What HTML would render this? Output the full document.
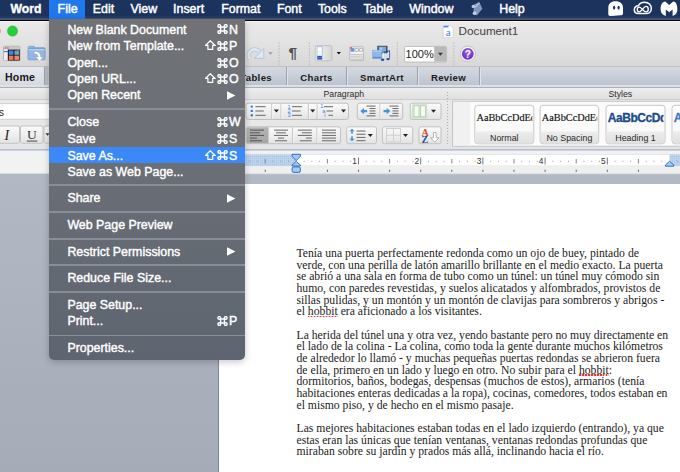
<!DOCTYPE html>
<html><head><meta charset="utf-8">
<style>
*{margin:0;padding:0;box-sizing:border-box}
html,body{width:680px;height:472px;overflow:hidden;background:#b3b9c2;font-family:"Liberation Sans",sans-serif}
.a{position:absolute}
#menubar{left:0;top:0;width:680px;height:19.7px;background:linear-gradient(#1c335d 0px,#1c335d 16.4px,#213b69 16.4px,#213b69 18.3px,#4a5468 18.3px)}
.m{position:absolute;top:2.4px;font-size:12.4px;color:#fff;line-height:15px;-webkit-text-stroke:0.45px #fff;white-space:nowrap}
#mbline{left:0;top:19.7px;width:680px;height:1.3px;background:#0a0b0e}
#toolbar{left:0;top:21px;width:680px;height:46px;background:linear-gradient(#f2f2f2,#e8e8e8 6%,#e4e4e4 40%,#d8d8d8);border-bottom:1px solid #c0c0c0}
#tabs{left:0;top:67px;width:680px;height:18px;background:linear-gradient(#d5dae1,#bdc4ce)}
.tab{position:absolute;top:0;height:18px;border-right:1px solid #9ba2ac;box-shadow:1px 0 0 #e0e4ea;font-size:9.6px;font-weight:bold;color:#1a1a1a;text-align:center;line-height:21.5px;letter-spacing:0.35px}
#tabline{left:0;top:85px;width:680px;height:2.5px;background:#dde1e7;border-bottom:1px solid #aab0b9}
#ribbon{left:0;top:87.5px;width:680px;height:62px;background:linear-gradient(#ececec,#e4e4e4)}
#grphdr{left:0;top:87.5px;width:680px;height:12px;background:linear-gradient(#ededed,#e0e0e0);border-bottom:1px solid #cdcdcd}
.ghdr{position:absolute;top:1.6px;font-size:8.7px;color:#2a2a2a;line-height:10px}
#docbg{left:0;top:174px;width:680px;height:298px;background:linear-gradient(#b3b9c4,#abb1bd 55%,#a5abb7)}
#page{left:218px;top:183.7px;width:470px;height:300px;background:#fff;border-left:1px solid #7f858e}
.dl{position:absolute;left:296.5px;font-family:"Liberation Serif",serif;font-size:11.7px;color:#222;line-height:12px;white-space:nowrap}
.dl u{text-decoration:none;position:relative}
.dl u::after{content:'';position:absolute;left:0;right:0;top:10.6px;height:1.6px;background:repeating-linear-gradient(90deg,#e03a3a 0 1.5px,rgba(224,58,58,0.35) 1.5px 3px)}
#svg{left:0;top:0}
#menu{left:49px;top:19px;width:196px;height:341px;background:linear-gradient(#707276,#6b6f76 40%,#636972 75%,#5f6570);border-radius:0 0 5px 5px;box-shadow:0 2px 7px rgba(0,0,0,0.22);overflow:hidden}
.mi{position:absolute;left:18.4px;font-size:12.4px;color:#fff;line-height:15px;white-space:nowrap;-webkit-text-stroke:0.4px #fff}
.ic{position:absolute;line-height:0}
.sep{position:absolute;left:0;width:196px;height:1.5px;background:#898e96}
.hl{position:absolute;left:0;width:196px;background:#3a89f6}
.title{left:458.6px;top:25.3px;font-size:11.7px;color:#3f3f3f;line-height:12px}
</style></head><body>
<div id="toolbar" class="a"></div>
<div id="tabs" class="a">
  <div class="tab" style="left:-1px;width:46px;box-shadow:1px 0 0 #b9bec6,2px 0 0 #b9bec6,3px 0 0 #b9bec6,4px 0 0 #c3c8cf;background:linear-gradient(#e6e9ee,#d5dae0);letter-spacing:0.1px;padding-right:3px;font-size:10.6px;line-height:21px">Home</div>
  <div class="tab" style="left:230px;width:57px;text-align:right;padding-right:14px">Tables</div>
  <div class="tab" style="left:287px;width:60px">Charts</div>
  <div class="tab" style="left:347px;width:71px">SmartArt</div>
  <div class="tab" style="left:418px;width:62px">Review</div>
</div>
<div id="tabline" class="a"></div>
<div id="ribbon" class="a"></div>
<div id="grphdr" class="a">
  <div class="ghdr" style="left:323.5px">Paragraph</div>
  <div class="ghdr" style="left:608.5px">Styles</div>
</div>
<div id="docbg" class="a"></div>
<div id="page" class="a"></div>
<svg id="svg" class="a" width="680" height="472" viewBox="0 0 680 472"><defs>
<linearGradient id="gbtn" x1="0" y1="0" x2="0" y2="1"><stop offset="0" stop-color="#fbfbfb"/><stop offset="1" stop-color="#e3e3e3"/></linearGradient>
<linearGradient id="gpress" x1="0" y1="0" x2="0" y2="1"><stop offset="0" stop-color="#b4b4b4"/><stop offset="1" stop-color="#a6a6a6"/></linearGradient>
<linearGradient id="gcard" x1="0" y1="0" x2="0" y2="1"><stop offset="0" stop-color="#ffffff"/><stop offset="1" stop-color="#f6f6f6"/></linearGradient>
<linearGradient id="glabel" x1="0" y1="0" x2="0" y2="1"><stop offset="0" stop-color="#ececec"/><stop offset="1" stop-color="#e0e0e0"/></linearGradient>
<linearGradient id="gside" x1="0" y1="0" x2="1" y2="0"><stop offset="0" stop-color="#f8f8f8"/><stop offset="1" stop-color="#d4d4d4"/></linearGradient>
<radialGradient id="ghelp" cx="0.5" cy="0.35" r="0.6"><stop offset="0" stop-color="#9a68e8"/><stop offset="1" stop-color="#6a2fc0"/></radialGradient>
<pattern id="rdots" width="2" height="2" patternUnits="userSpaceOnUse"><rect width="2" height="2" fill="#bcd3ee"/><rect width="1" height="1" fill="#a9c4e6"/></pattern>
</defs><circle cx="-4.6" cy="31" r="5.2" fill="#f26b5a"/><circle cx="12.5" cy="31" r="5.2" fill="#2bcb40" stroke="#24b536" stroke-width="0.4"/><rect x="3.7" y="46.3" width="16.2" height="14.3" rx="1" fill="#d8d8d8" stroke="#8a8a8a" stroke-width="0.6"/><rect x="3.9" y="46.5" width="15.8" height="3" fill="#c9c9c9"/><circle cx="5.6" cy="48" r="0.8" fill="#e8553a"/><circle cx="8" cy="48" r="0.8" fill="#e8553a"/><rect x="4" y="49.6" width="3.8" height="10.8" fill="#eef0f3"/><rect x="4" y="51" width="3.8" height="1.2" fill="#3a7fe0"/><rect x="7.8" y="49.6" width="11.9" height="10.9" fill="#151515"/><rect x="8.8" y="50.5" width="4.6" height="4.3" fill="#3e86e6"/><rect x="14.4" y="50.5" width="4.6" height="4.3" fill="#6d9fd6"/><circle cx="17.8" cy="51" r="0.8" fill="#3ad24a"/><rect x="8.8" y="55.6" width="4.6" height="4.3" fill="#ee7a55"/><rect x="14.4" y="55.6" width="4.6" height="4.3" fill="#f08a5e"/><path d="M28.3,49 V47.2 a1,1 0 0 1 1,-1 h4.8 l1.3,1.4 h8.4 a1.2,1.2 0 0 1 1.2,1.2 V49 Z" fill="#8cafdf" stroke="#6b92c9" stroke-width="0.5"/><rect x="27.9" y="48.4" width="17.3" height="11.5" rx="1.3" fill="#94b6e2" stroke="#6b92c9" stroke-width="0.6"/><rect x="28.5" y="49.2" width="16.1" height="1.1" fill="#c2d6f0"/><path d="M34.2,51.4 C38.4,51.2 40.6,53.4 40.8,57 H43.2 L39.6,61.6 L35.8,57 H38.2 C38,54.8 36.8,53.6 34.2,53.8 Z" fill="#ffffff" stroke="#9aa6b6" stroke-width="0.5"/><path d="M250,59 A5.6,5.6 0 0 1 259.2,51.6" stroke="#b3c4db" stroke-width="4.4" fill="none"/><path d="M250,59 A5.6,5.6 0 0 1 259.2,51.6" stroke="#dfe8f3" stroke-width="2.6" fill="none"/><path d="M263.8,48.5 V58.3 H254.5 Z" fill="#dfe8f3" stroke="#b3c4db" stroke-width="0.9" stroke-linejoin="round"/><path d="M268.25,52.15 h4.5 l-2.25,2.6999999999999997 z" fill="#9a9a9a"/><line x1="279" y1="42.6" x2="279" y2="64.7" stroke="#a8a8a8" stroke-width="1" stroke-dasharray="1 2"/><line x1="309.4" y1="42.6" x2="309.4" y2="64.7" stroke="#a8a8a8" stroke-width="1" stroke-dasharray="1 2"/><line x1="397.3" y1="42.6" x2="397.3" y2="64.7" stroke="#a8a8a8" stroke-width="1" stroke-dasharray="1 2"/><line x1="453.8" y1="42.6" x2="453.8" y2="64.7" stroke="#a8a8a8" stroke-width="1" stroke-dasharray="1 2"/><line x1="447.6" y1="92" x2="447.6" y2="146" stroke="#a8a8a8" stroke-width="1" stroke-dasharray="1 2"/><text x="288.4" y="58.4" font-family="Liberation Sans" font-size="15.5" font-weight="bold" fill="#505050">&#182;</text><rect x="315.3" y="45.6" width="16.6" height="15.2" rx="1.5" fill="url(#gside)" stroke="#b5b5b5" stroke-width="0.7"/><rect x="317" y="46.6" width="5.2" height="13" fill="#eef3fa" stroke="#86b0e6" stroke-width="0.6"/><rect x="317.8" y="48" width="3.6" height="2.9" fill="#fff"/><rect x="317.8" y="52.2" width="3.6" height="2.9" fill="#fafcff"/><rect x="317.3" y="55.9" width="4.6" height="3.5" fill="#2459b2"/><rect x="317.6" y="57.2" width="4" height="0.6" fill="#6f97d6"/><path d="M336.7,51.940000000000005 h4.2 l-2.1,2.52 z" fill="#111"/><rect x="349.8" y="46.9" width="13.8" height="13.7" rx="1" fill="#f3f3f3" stroke="#9c9c9c" stroke-width="0.6"/><rect x="350.2" y="47.5" width="13" height="4.6" fill="#dedede"/><rect x="350.6" y="48.2" width="3.5" height="3.4" fill="#5d95dc"/><circle cx="351" cy="47.8" r="0.9" fill="#e84b3a"/><rect x="354.8" y="48.6" width="3.8" height="2.6" rx="1.2" fill="#fff" stroke="#777" stroke-width="0.5"/><rect x="359.1" y="48.6" width="3.8" height="2.6" rx="1.2" fill="#fff" stroke="#777" stroke-width="0.5"/><rect x="350.5" y="54.2" width="12.4" height="1.1" fill="#bdbdbd"/><rect x="350.5" y="56.400000000000006" width="12.4" height="1.1" fill="#bdbdbd"/><rect x="350.5" y="58.6" width="12.4" height="1.1" fill="#bdbdbd"/><rect x="377.2" y="45.8" width="10.4" height="7.4" rx="0.6" fill="#4f5358"/><rect x="378.8" y="46.8" width="7.2" height="5.6" fill="#79a9e0"/><rect x="379.5" y="47.4" width="3" height="2.5" fill="#a9c9ee"/><rect x="372.6" y="50.2" width="9.2" height="8.3" fill="#8fb8ea" stroke="#6d9bd6" stroke-width="0.5"/><rect x="372.9" y="56.8" width="8.6" height="1.4" fill="#5f8fcf"/><rect x="372.9" y="50.5" width="8.6" height="1.2" fill="#b5d0f0"/><path d="M382.6,52.6 L389.4,51 V58.6" fill="none" stroke="#1f53a8" stroke-width="1.3"/><path d="M383.3,52.4 V59.4" fill="none" stroke="#e8eef6" stroke-width="1.1"/><path d="M388.7,51.4 V58.8" fill="none" stroke="#e8eef6" stroke-width="1.1"/><ellipse cx="382.6" cy="59.7" rx="1.7" ry="1.2" fill="#1f53a8"/><ellipse cx="388" cy="59.1" rx="1.7" ry="1.2" fill="#1f53a8"/><rect x="404.6" y="46.4" width="42" height="15.6" rx="1" fill="#ffffff" stroke="#b3b3b3" stroke-width="0.8"/><rect x="434.4" y="46.8" width="11.9" height="14.8" fill="#b9b9b9"/><line x1="434.4" y1="46.8" x2="434.4" y2="61.6" stroke="#bdbdbd" stroke-width="0.6"/><path d="M437.9,52.7 h5 l-2.5,3.0 z" fill="#3a3a3a"/><text x="405.6" y="58.4" font-family="Liberation Sans" font-size="11" fill="#1a1a1a">100%</text><circle cx="467.8" cy="53.8" r="7.6" fill="#f8f8f8" stroke="#a8a8a8" stroke-width="0.6"/><circle cx="467.8" cy="53.8" r="5.9" fill="url(#ghelp)"/><text x="467.8" y="57.6" font-family="Liberation Sans" font-size="10" font-weight="bold" fill="#fff" text-anchor="middle">?</text><path d="M443.2,25.5 h7 l3,3 v9.1 h-10 z" fill="#ffffff" stroke="#c9c9c9" stroke-width="0.6"/><rect x="443.5" y="25.8" width="5" height="1.6" fill="#4a8be0"/><text x="448.3" y="36.3" font-family="Liberation Serif" font-size="11" fill="#3a7fd8" text-anchor="middle">a</text><rect x="-2" y="103.7" width="60" height="15.5" fill="#ffffff" stroke="#c8c8c8" stroke-width="0.8"/><rect x="-5.5" y="126.0" width="25" height="17.30000000000001" rx="2" fill="url(#gbtn)" stroke="#c2c2c2" stroke-width="1"/><rect x="20.5" y="126.0" width="22.5" height="17.30000000000001" rx="2" fill="url(#gbtn)" stroke="#c2c2c2" stroke-width="1"/><rect x="44.0" y="126.0" width="15.5" height="17.30000000000001" rx="2" fill="url(#gbtn)" stroke="#c2c2c2" stroke-width="1"/><text x="4.5" y="139.5" font-family="Liberation Serif" font-size="14" font-style="italic" fill="#222">I</text><text x="27" y="139" font-family="Liberation Serif" font-size="13.5" fill="#333">U</text><rect x="26.8" y="140.6" width="10.5" height="0.9" fill="#333"/><path d="M45.5,133.3 h4 l-2.0,2.4 z" fill="#333"/><rect x="246.0" y="103.2" width="102.5" height="16.299999999999997" rx="2.5" fill="url(#gbtn)" stroke="#bfbfbf" stroke-width="1"/><rect x="271.3" y="103.7" width="1" height="15.299999999999997" fill="#c4c4c4"/><rect x="272.3" y="103.7" width="0.8" height="15.299999999999997" fill="#ffffff" opacity="0.7"/><rect x="280.5" y="103.7" width="1" height="15.299999999999997" fill="#c4c4c4"/><rect x="281.5" y="103.7" width="0.8" height="15.299999999999997" fill="#ffffff" opacity="0.7"/><rect x="307.9" y="103.7" width="1" height="15.299999999999997" fill="#c4c4c4"/><rect x="308.9" y="103.7" width="0.8" height="15.299999999999997" fill="#ffffff" opacity="0.7"/><rect x="316.7" y="103.7" width="1" height="15.299999999999997" fill="#c4c4c4"/><rect x="317.7" y="103.7" width="0.8" height="15.299999999999997" fill="#ffffff" opacity="0.7"/><path d="M273.9,109.5 h5 l-2.5,3.0 z" fill="#222"/><circle cx="251.8" cy="106.6" r="1.2" fill="#2f7be6"/><circle cx="251.8" cy="110.9" r="1.2" fill="#2f7be6"/><circle cx="251.8" cy="115.3" r="1.2" fill="#2f7be6"/><rect x="255.4" y="106.1" width="10.3" height="1.1" fill="#747474"/><rect x="255.4" y="110.44999999999999" width="8.4" height="1.1" fill="#747474"/><rect x="255.4" y="114.8" width="10.3" height="1.1" fill="#747474"/><path d="M310.2,109.5 h5 l-2.5,3.0 z" fill="#222"/><text x="287.4" y="108.6" font-family="Liberation Sans" font-size="5.6" fill="#3a84e6">1</text><text x="287.4" y="113" font-family="Liberation Sans" font-size="5.6" fill="#3a84e6">2</text><text x="287.4" y="117.4" font-family="Liberation Sans" font-size="5.6" fill="#3a84e6">3</text><rect x="292" y="106.1" width="10" height="1.1" fill="#747474"/><rect x="292" y="110.44999999999999" width="8.5" height="1.1" fill="#747474"/><rect x="292" y="114.8" width="10" height="1.1" fill="#747474"/><path d="M341.0,109.5 h5 l-2.5,3.0 z" fill="#222"/><text x="320.3" y="108" font-family="Liberation Sans" font-size="5.6" fill="#3a84e6">1</text><text x="322.3" y="112.6" font-family="Liberation Sans" font-size="5.6" fill="#3a84e6">a</text><text x="324.3" y="117.4" font-family="Liberation Sans" font-size="5.6" fill="#3a84e6">i</text><rect x="324" y="106.1" width="9" height="1.1" fill="#747474"/><rect x="326.5" y="110.44999999999999" width="6.5" height="1.1" fill="#747474"/><rect x="328.5" y="114.8" width="4.5" height="1.1" fill="#747474"/><rect x="357.3" y="103.2" width="45.39999999999998" height="16.299999999999997" rx="2.5" fill="url(#gbtn)" stroke="#bfbfbf" stroke-width="1"/><rect x="379.5" y="103.7" width="1" height="15.299999999999997" fill="#c4c4c4"/><rect x="380.5" y="103.7" width="0.8" height="15.299999999999997" fill="#ffffff" opacity="0.7"/><rect x="366.5" y="105.5" width="9" height="1.1" fill="#747474"/><rect x="369.5" y="107.95" width="6" height="1.1" fill="#747474"/><rect x="369.5" y="110.4" width="6" height="1.1" fill="#747474"/><rect x="369.5" y="112.85" width="6" height="1.1" fill="#747474"/><rect x="366.5" y="115.3" width="9" height="1.1" fill="#747474"/><path d="M360.3,111.1 l3.6,-3.1 v2 h3.2 v2.2 h-3.2 v2 z" fill="#4b8fe0"/><rect x="389.5" y="105.5" width="9" height="1.1" fill="#747474"/><rect x="392.5" y="107.95" width="6" height="1.1" fill="#747474"/><rect x="392.5" y="110.4" width="6" height="1.1" fill="#747474"/><rect x="392.5" y="112.85" width="6" height="1.1" fill="#747474"/><rect x="389.5" y="115.3" width="9" height="1.1" fill="#747474"/><path d="M390.3,111.1 l-3.6,-3.1 v2 h-3.2 v2.2 h3.2 v2 z" fill="#4b8fe0"/><rect x="410.2" y="103.2" width="30.80000000000001" height="16.299999999999997" rx="2" fill="url(#gbtn)" stroke="#c2c2c2" stroke-width="1"/><rect x="412.7" y="104.8" width="14" height="13" fill="#e3ede1" stroke="#c4d9be" stroke-width="0.8"/><rect x="414" y="105.8" width="5" height="11" fill="#f6f9f5" stroke="#a6c89d" stroke-width="0.7"/><rect x="420.5" y="105.8" width="5" height="11" fill="#f6f9f5" stroke="#a6c89d" stroke-width="0.7"/><path d="M431.0,109.7 h5 l-2.5,3.0 z" fill="#222"/><rect x="246.0" y="126.8" width="94.5" height="16.89999999999999" rx="2.5" fill="url(#gbtn)" stroke="#bfbfbf" stroke-width="1"/><path d="M268.3,127.3 V143.2 H249.0 a2.5,2.5 0 0 1 -2.5,-2.5 V129.8 a2.5,2.5 0 0 1 2.5,-2.5 Z" fill="url(#gpress)"/><rect x="268.3" y="127.3" width="1" height="15.899999999999991" fill="#c4c4c4"/><rect x="269.3" y="127.3" width="0.8" height="15.899999999999991" fill="#ffffff" opacity="0.7"/><rect x="292.1" y="127.3" width="1" height="15.899999999999991" fill="#c4c4c4"/><rect x="293.1" y="127.3" width="0.8" height="15.899999999999991" fill="#ffffff" opacity="0.7"/><rect x="316.4" y="127.3" width="1" height="15.899999999999991" fill="#c4c4c4"/><rect x="317.4" y="127.3" width="0.8" height="15.899999999999991" fill="#ffffff" opacity="0.7"/><rect x="250" y="129.6" width="14" height="1.1" fill="#5a5a5a"/><rect x="250" y="132.25" width="10" height="1.1" fill="#5a5a5a"/><rect x="250" y="134.9" width="14" height="1.1" fill="#5a5a5a"/><rect x="250" y="137.54999999999998" width="7" height="1.1" fill="#5a5a5a"/><rect x="250" y="140.2" width="12" height="1.1" fill="#5a5a5a"/><rect x="274" y="129.6" width="14" height="1.1" fill="#747474"/><rect x="276" y="132.25" width="10" height="1.1" fill="#747474"/><rect x="274" y="134.9" width="14" height="1.1" fill="#747474"/><rect x="278" y="137.54999999999998" width="6" height="1.1" fill="#747474"/><rect x="275" y="140.2" width="12" height="1.1" fill="#747474"/><rect x="297.8" y="129.6" width="14" height="1.1" fill="#747474"/><rect x="301.8" y="132.25" width="10" height="1.1" fill="#747474"/><rect x="297.8" y="134.9" width="14" height="1.1" fill="#747474"/><rect x="305.8" y="137.54999999999998" width="6" height="1.1" fill="#747474"/><rect x="299.8" y="140.2" width="12" height="1.1" fill="#747474"/><rect x="322" y="129.6" width="14" height="1.1" fill="#747474"/><rect x="322" y="132.25" width="14" height="1.1" fill="#747474"/><rect x="322" y="134.9" width="14" height="1.1" fill="#747474"/><rect x="322" y="137.54999999999998" width="14" height="1.1" fill="#747474"/><rect x="322" y="140.2" width="14" height="1.1" fill="#747474"/><rect x="346.7" y="126.8" width="29.80000000000001" height="16.89999999999999" rx="2" fill="url(#gbtn)" stroke="#c2c2c2" stroke-width="1"/><path d="M352,128.8 l2.5,2.5 h-1.7 v2.5 h-1.6 v-2.5 h-1.7 z M352,141.2 l2.5,-2.5 h-1.7 v-2.5 h-1.6 v2.5 h-1.7 z" fill="#4b8fe0"/><rect x="356.5" y="130.5" width="9" height="1.1" fill="#747474"/><rect x="356.5" y="133.7" width="9" height="1.1" fill="#747474"/><rect x="356.5" y="136.9" width="9" height="1.1" fill="#747474"/><rect x="356.5" y="140.1" width="9" height="1.1" fill="#747474"/><path d="M367.8,134.0 h5 l-2.5,3.0 z" fill="#222"/><rect x="382.5" y="126.8" width="30.19999999999999" height="16.89999999999999" rx="2" fill="url(#gbtn)" stroke="#c2c2c2" stroke-width="1"/><rect x="386.5" y="128.5" width="14" height="13.5" fill="none" stroke="#d0d0d0" stroke-width="1"/><line x1="393.5" y1="128.5" x2="393.5" y2="142" stroke="#d0d0d0"/><line x1="386.5" y1="135.2" x2="400.5" y2="135.2" stroke="#d0d0d0"/><path d="M403.0,134.0 h5 l-2.5,3.0 z" fill="#222"/><rect x="419.0" y="126.8" width="22.0" height="16.89999999999999" rx="2" fill="url(#gbtn)" stroke="#c2c2c2" stroke-width="1"/><text x="421.6" y="136" font-family="Liberation Serif" font-size="10" font-weight="bold" fill="#d8482a">A</text><text x="421.6" y="143.4" font-family="Liberation Serif" font-size="10" font-weight="bold" fill="#1e4f98">Z</text><path d="M433.5,132.5 h2.6 v5.3 h2.8 l-4.1,4.4 l-4.1,-4.4 h2.8 z" fill="#fff" stroke="#8a8a8a" stroke-width="0.6"/><rect x="452.5" y="101.3" width="240" height="45" fill="#fbfbfb" stroke="#c3c3c3" stroke-width="1"/><rect x="453" y="101.8" width="17" height="44" fill="#f1f1f1"/><rect x="474.8" y="105.3" width="58.99999999999994" height="38.5" rx="3" fill="url(#gcard)" stroke="#c7c7c7" stroke-width="1"/><path d="M475.3,131.6 h57.99999999999994 v9.5 a2.5,2.5 0 0 1 -2.5,2.5 h-52.99999999999994 a2.5,2.5 0 0 1 -2.5,-2.5 z" fill="url(#glabel)"/><clipPath id="c474"><rect x="476.3" y="106" width="55.99999999999994" height="25"/></clipPath><text x="476.5" y="121.2" clip-path="url(#c474)" font-family="Liberation Serif" font-size="10.3" fill="#111" stroke="#111" stroke-width="0.15">AaBbCcDdEe</text><text x="504.29999999999995" y="140.6" font-family="Liberation Sans" font-size="8.9" fill="#2a2a2a" text-anchor="middle">Normal</text><rect x="540.1" y="105.3" width="58.60000000000002" height="38.5" rx="3" fill="url(#gcard)" stroke="#c7c7c7" stroke-width="1"/><path d="M540.6,131.6 h57.60000000000002 v9.5 a2.5,2.5 0 0 1 -2.5,2.5 h-52.60000000000002 a2.5,2.5 0 0 1 -2.5,-2.5 z" fill="url(#glabel)"/><clipPath id="c539"><rect x="541.6" y="106" width="55.60000000000002" height="25"/></clipPath><text x="541.8000000000001" y="121.2" clip-path="url(#c539)" font-family="Liberation Serif" font-size="10.3" fill="#111" stroke="#111" stroke-width="0.15">AaBbCcDdEe</text><text x="569.4000000000001" y="140.6" font-family="Liberation Sans" font-size="8.9" fill="#2a2a2a" text-anchor="middle">No Spacing</text><rect x="606.0" y="105.3" width="59.0" height="38.5" rx="3" fill="url(#gcard)" stroke="#c7c7c7" stroke-width="1"/><path d="M606.5,131.6 h58.0 v9.5 a2.5,2.5 0 0 1 -2.5,2.5 h-53.0 a2.5,2.5 0 0 1 -2.5,-2.5 z" fill="url(#glabel)"/><clipPath id="c605"><rect x="607.5" y="106" width="56.0" height="25"/></clipPath><text x="607.8" y="122.3" clip-path="url(#c605)" font-family="Liberation Sans" font-size="12" font-weight="bold" fill="#1d4a8c" stroke="#1d4a8c" stroke-width="0.3" letter-spacing="-0.45">AaBbCcDd</text><text x="635.5" y="140.6" font-family="Liberation Sans" font-size="8.9" fill="#2a2a2a" text-anchor="middle">Heading 1</text><rect x="672.0" y="105.3" width="59.0" height="38.5" rx="3" fill="url(#gcard)" stroke="#c7c7c7" stroke-width="1"/><path d="M672.5,131.6 h58.0 v9.5 a2.5,2.5 0 0 1 -2.5,2.5 h-53.0 a2.5,2.5 0 0 1 -2.5,-2.5 z" fill="url(#glabel)"/><clipPath id="c671"><rect x="673.5" y="106" width="56.0" height="25"/></clipPath><text x="673.8" y="122.3" clip-path="url(#c671)" font-family="Liberation Sans" font-size="12" font-weight="bold" fill="#3f78c8" stroke="#3f78c8" stroke-width="0.3" letter-spacing="-0.45">AaBbCcDd</text><rect x="-1" y="149" width="700" height="1.6" fill="#b4c1d0"/><rect x="-1" y="150.6" width="700" height="23" fill="#f2f2f2"/><rect x="218" y="173.5" width="480" height="1" fill="#c4c8ce"/><rect x="218" y="154.4" width="480" height="11.6" fill="#ffffff"/><rect x="218" y="154.4" width="78" height="11.6" fill="url(#rdots)"/><rect x="669.5" y="154.4" width="30" height="11.6" fill="url(#rdots)"/><line x1="218" y1="154.4" x2="700" y2="154.4" stroke="#d5d5d5" stroke-width="0.6"/><line x1="218" y1="166" x2="700" y2="166" stroke="#d5d5d5" stroke-width="0.6"/><rect x="218" y="166.3" width="480" height="7.2" fill="#efefef"/><rect x="249.15" y="160.8" width="1" height="1" fill="#999"/><rect x="256.925" y="160.8" width="1" height="1" fill="#999"/><rect x="264.7" y="159" width="1" height="4.5" fill="#888"/><rect x="272.475" y="160.8" width="1" height="1" fill="#999"/><rect x="280.25" y="160.8" width="1" height="1" fill="#999"/><rect x="288.02500000000003" y="160.8" width="1" height="1" fill="#999"/><rect x="303.575" y="160.8" width="1" height="1" fill="#999"/><rect x="311.35" y="160.8" width="1" height="1" fill="#999"/><rect x="319.125" y="160.8" width="1" height="1" fill="#999"/><rect x="326.90000000000003" y="159" width="1" height="4.5" fill="#888"/><rect x="334.675" y="160.8" width="1" height="1" fill="#999"/><rect x="342.45000000000005" y="160.8" width="1" height="1" fill="#999"/><rect x="350.225" y="160.8" width="1" height="1" fill="#999"/><rect x="358.0" y="157.5" width="1" height="7" fill="#777"/><text x="356.9" y="164.3" font-family="Liberation Sans" font-size="8.4" fill="#333" text-anchor="end">1</text><rect x="365.77500000000003" y="160.8" width="1" height="1" fill="#999"/><rect x="373.55" y="160.8" width="1" height="1" fill="#999"/><rect x="381.32500000000005" y="160.8" width="1" height="1" fill="#999"/><rect x="389.1" y="159" width="1" height="4.5" fill="#888"/><rect x="396.875" y="160.8" width="1" height="1" fill="#999"/><rect x="404.65000000000003" y="160.8" width="1" height="1" fill="#999"/><rect x="412.425" y="160.8" width="1" height="1" fill="#999"/><rect x="420.20000000000005" y="157.5" width="1" height="7" fill="#777"/><text x="419.1" y="164.3" font-family="Liberation Sans" font-size="8.4" fill="#333" text-anchor="end">2</text><rect x="427.975" y="160.8" width="1" height="1" fill="#999"/><rect x="435.75" y="160.8" width="1" height="1" fill="#999"/><rect x="443.525" y="160.8" width="1" height="1" fill="#999"/><rect x="451.3" y="159" width="1" height="4.5" fill="#888"/><rect x="459.07500000000005" y="160.8" width="1" height="1" fill="#999"/><rect x="466.85" y="160.8" width="1" height="1" fill="#999"/><rect x="474.625" y="160.8" width="1" height="1" fill="#999"/><rect x="482.40000000000003" y="157.5" width="1" height="7" fill="#777"/><text x="481.3" y="164.3" font-family="Liberation Sans" font-size="8.4" fill="#333" text-anchor="end">3</text><rect x="490.175" y="160.8" width="1" height="1" fill="#999"/><rect x="497.95000000000005" y="160.8" width="1" height="1" fill="#999"/><rect x="505.725" y="160.8" width="1" height="1" fill="#999"/><rect x="513.5" y="159" width="1" height="4.5" fill="#888"/><rect x="521.2750000000001" y="160.8" width="1" height="1" fill="#999"/><rect x="529.05" y="160.8" width="1" height="1" fill="#999"/><rect x="536.825" y="160.8" width="1" height="1" fill="#999"/><rect x="544.6" y="157.5" width="1" height="7" fill="#777"/><text x="543.5" y="164.3" font-family="Liberation Sans" font-size="8.4" fill="#333" text-anchor="end">4</text><rect x="552.375" y="160.8" width="1" height="1" fill="#999"/><rect x="560.1500000000001" y="160.8" width="1" height="1" fill="#999"/><rect x="567.925" y="160.8" width="1" height="1" fill="#999"/><rect x="575.7" y="159" width="1" height="4.5" fill="#888"/><rect x="583.475" y="160.8" width="1" height="1" fill="#999"/><rect x="591.25" y="160.8" width="1" height="1" fill="#999"/><rect x="599.0250000000001" y="160.8" width="1" height="1" fill="#999"/><rect x="606.8" y="157.5" width="1" height="7" fill="#777"/><text x="605.6999999999999" y="164.3" font-family="Liberation Sans" font-size="8.4" fill="#333" text-anchor="end">5</text><rect x="614.575" y="160.8" width="1" height="1" fill="#999"/><rect x="622.35" y="160.8" width="1" height="1" fill="#999"/><rect x="630.125" y="160.8" width="1" height="1" fill="#999"/><rect x="637.9000000000001" y="159" width="1" height="4.5" fill="#888"/><rect x="645.675" y="160.8" width="1" height="1" fill="#999"/><rect x="653.45" y="160.8" width="1" height="1" fill="#999"/><rect x="661.225" y="160.8" width="1" height="1" fill="#999"/><rect x="676.7750000000001" y="160.8" width="1" height="1" fill="#999"/><rect x="264.7" y="169.7" width="1" height="2.2" fill="#666"/><rect x="295.8" y="169.7" width="1" height="2.2" fill="#666"/><rect x="326.90000000000003" y="169.7" width="1" height="2.2" fill="#666"/><rect x="358.0" y="169.7" width="1" height="2.2" fill="#666"/><rect x="389.1" y="169.7" width="1" height="2.2" fill="#666"/><rect x="420.20000000000005" y="169.7" width="1" height="2.2" fill="#666"/><rect x="451.3" y="169.7" width="1" height="2.2" fill="#666"/><rect x="482.40000000000003" y="169.7" width="1" height="2.2" fill="#666"/><rect x="513.5" y="169.7" width="1" height="2.2" fill="#666"/><rect x="544.6" y="169.7" width="1" height="2.2" fill="#666"/><rect x="575.7" y="169.7" width="1" height="2.2" fill="#666"/><rect x="606.8" y="169.7" width="1" height="2.2" fill="#666"/><rect x="637.9000000000001" y="169.7" width="1" height="2.2" fill="#666"/><path d="M292.1,154.3 h8.3 v2 l-4.15,4.3 l-4.15,-4.3 z" fill="#a4c9f3" stroke="#2360c4" stroke-width="0.9" stroke-linejoin="round"/><path d="M296.25,161.4 l4.15,3.6 v1 h-8.3 v-1 z" fill="#a4c9f3" stroke="#2360c4" stroke-width="0.9" stroke-linejoin="round"/><rect x="292.1" y="166.9" width="8.3" height="5.5" rx="1.5" fill="#a4c9f3" stroke="#2360c4" stroke-width="0.9"/><path d="M669.6,161.3 l4.2,3.7 v1.2 h-8.4 v-1.2 z" fill="#a4c9f3" stroke="#2360c4" stroke-width="0.9" stroke-linejoin="round"/></svg>
<div class="a title">Document1</div>
<div class="a" style="left:-1px;top:107px;font-size:10px;color:#222">s</div>
<div class="dl" style="top:248.00px">Tenía una puerta perfectamente redonda como un ojo de buey, pintado de</div>
<div class="dl" style="top:259.66px">verde, con una perilla de latón amarillo brillante en el medio exacto. La puerta</div>
<div class="dl" style="top:271.32px">se abrió a una sala en forma de tubo como un túnel: un túnel muy cómodo sin</div>
<div class="dl" style="top:282.98px">humo, con paredes revestidas, y suelos alicatados y alfombrados, provistos de</div>
<div class="dl" style="top:294.64px">sillas pulidas, y un montón y un montón de clavijas para sombreros y abrigos -</div>
<div class="dl" style="top:306.30px">el <u>hobbit</u> era aficionado a los visitantes.</div>
<div class="dl" style="top:329.62px">La herida del túnel una y otra vez, yendo bastante pero no muy directamente en</div>
<div class="dl" style="top:341.28px">el lado de la colina - La colina, como toda la gente durante muchos kilómetros</div>
<div class="dl" style="top:352.94px">de alrededor lo llamó - y muchas pequeñas puertas redondas se abrieron fuera</div>
<div class="dl" style="top:364.60px">de ella, primero en un lado y luego en otro. No subir para el <u>hobbit</u>:</div>
<div class="dl" style="top:376.26px">dormitorios, baños, bodegas, despensas (muchos de estos), armarios (tenía</div>
<div class="dl" style="top:387.92px">habitaciones enteras dedicadas a la ropa), cocinas, comedores, todos estaban en</div>
<div class="dl" style="top:399.58px">el mismo piso, y de hecho en el mismo pasaje.</div>
<div class="dl" style="top:422.90px">Las mejores habitaciones estaban todas en el lado izquierdo (entrando), ya que</div>
<div class="dl" style="top:434.56px">estas eran las únicas que tenían ventanas, ventanas redondas profundas que</div>
<div class="dl" style="top:446.22px">miraban sobre su jardín y prados más allá, inclinando hacia el río.</div>
<div id="menubar" class="a">
  <div class="a" style="left:49px;top:0;width:36.3px;height:18.6px;background:#1f78ec"></div>
  <div class="m" style="left:10.5px;font-weight:bold;font-size:12.2px;-webkit-text-stroke:0.35px #fff">Word</div>
  <div class="m" style="left:57.6px">File</div>
  <div class="m" style="left:92.8px">Edit</div>
  <div class="m" style="left:130.5px">View</div>
  <div class="m" style="left:173.1px">Insert</div>
  <div class="m" style="left:221.2px">Format</div>
  <div class="m" style="left:276.9px">Font</div>
  <div class="m" style="left:317.9px">Tools</div>
  <div class="m" style="left:363.4px">Table</div>
  <div class="m" style="left:409.3px">Window</div>
  <div class="m" style="left:499.2px">Help</div>
  <svg class="a" style="left:0;top:0" width="680" height="19" viewBox="0 0 680 19">
    <path d="M473.8,4.8 L479.2,1.8 L482.4,8.8 L476.8,15.6 L473.6,12.2 Z" fill="#7f96ba"/>
    <circle cx="473.3" cy="6.4" r="1.7" fill="#b9cbe6"/><circle cx="474.6" cy="13.2" r="1.9" fill="#b9cbe6"/>
    <path d="M475,7.4 L479.2,3.2" stroke="#e8eef8" stroke-width="1"/>
    <path d="M608.3,14.3 V8 C608.3,3.6 611,1.3 615.6,1.3 C620.2,1.3 623,3.6 623,8 V13.3 C623,14.9 622.2,15.3 620.6,15.3 L611,15.9 C609.2,16 608.3,15.7 608.3,14.3 Z" fill="#fff"/>
    <ellipse cx="614.1" cy="7.7" rx="1.15" ry="1.9" fill="#1c335d"/><ellipse cx="618.6" cy="7.7" rx="1.15" ry="1.9" fill="#1c335d"/>
    <path d="M638.6,13.6 C635.6,13.6 634.3,11.7 634.3,9.7 C634.3,7.4 636,5.8 638.3,5.8 C639.5,3.4 641.8,2.2 644.6,2.2 C648.6,2.2 651.3,5 651.3,8.4 C651.3,11.5 649.1,13.6 646.2,13.6 Z" stroke="#fff" stroke-width="1.5" fill="none"/>
    <path d="M639.2,11.9 C636.6,11.9 636.6,7.1 639.2,7.1 C641.6,7.1 643.6,11.9 646,11.9 C649,11.9 649,6.4 646,6.4 C643.6,6.4 641.6,11.9 639.2,11.9 Z" stroke="#fff" stroke-width="1.4" fill="none"/>
    <path d="M660.6,9.3 C660.6,4.4 662.6,1.4 665.2,1.4 L669.2,5.1 L673.2,1.4 C675.8,1.4 677.4,4.4 677.4,9.3 C677.4,12.9 675.6,15.3 672.6,15.9 L672.6,9.4 L669.2,12.2 L665.8,9.4 L665.8,15.9 C662.6,15.3 660.6,12.9 660.6,9.3 Z" fill="#fff"/>
  </svg>
</div>
<div id="mbline" class="a"></div>
<div id="menu" class="a">
<div class="hl" style="top:127.9px;height:16.299999999999983px"></div>
<div class="mi" style="top:3.50px">New Blank Document</div>
<div class="ic" style="left:168.3px;top:5.10px"><svg width="11" height="10" viewBox="0 0 11 10"><path d="M3.6,3 V7 M7.4,3 V7 M3.6,3 H7.4 M3.6,7 H7.4 M3.6,3 V1.9 A1.35,1.35 0 1 0 2.25,3.3 H3.6 M7.4,3 V1.9 A1.35,1.35 0 1 1 8.75,3.3 H7.4 M3.6,7 V8.1 A1.35,1.35 0 1 1 2.25,6.7 H3.6 M7.4,7 V8.1 A1.35,1.35 0 1 0 8.75,6.7 H7.4" fill="none" stroke="#fff" stroke-width="1.4"/></svg></div>
<div class="mi" style="left:180px;top:3.50px">N</div>
<div class="mi" style="top:19.90px">New from Template...</div>
<div class="ic" style="left:168.3px;top:21.50px"><svg width="11" height="10" viewBox="0 0 11 10"><path d="M3.6,3 V7 M7.4,3 V7 M3.6,3 H7.4 M3.6,7 H7.4 M3.6,3 V1.9 A1.35,1.35 0 1 0 2.25,3.3 H3.6 M7.4,3 V1.9 A1.35,1.35 0 1 1 8.75,3.3 H7.4 M3.6,7 V8.1 A1.35,1.35 0 1 1 2.25,6.7 H3.6 M7.4,7 V8.1 A1.35,1.35 0 1 0 8.75,6.7 H7.4" fill="none" stroke="#fff" stroke-width="1.4"/></svg></div>
<div class="mi" style="left:180px;top:19.90px">P</div>
<div class="ic" style="left:155.9px;top:21.20px"><svg width="11" height="10" viewBox="0 0 11 10"><path d="M5.3,0.7 L10,5.3 H7.7 V9.3 H2.9 V5.3 H0.6 Z" fill="none" stroke="#fff" stroke-width="1.2" stroke-linejoin="miter"/></svg></div>
<div class="mi" style="top:36.90px">Open...</div>
<div class="ic" style="left:168.3px;top:38.50px"><svg width="11" height="10" viewBox="0 0 11 10"><path d="M3.6,3 V7 M7.4,3 V7 M3.6,3 H7.4 M3.6,7 H7.4 M3.6,3 V1.9 A1.35,1.35 0 1 0 2.25,3.3 H3.6 M7.4,3 V1.9 A1.35,1.35 0 1 1 8.75,3.3 H7.4 M3.6,7 V8.1 A1.35,1.35 0 1 1 2.25,6.7 H3.6 M7.4,7 V8.1 A1.35,1.35 0 1 0 8.75,6.7 H7.4" fill="none" stroke="#fff" stroke-width="1.4"/></svg></div>
<div class="mi" style="left:180px;top:36.90px">O</div>
<div class="mi" style="top:53.10px">Open URL...</div>
<div class="ic" style="left:168.3px;top:54.70px"><svg width="11" height="10" viewBox="0 0 11 10"><path d="M3.6,3 V7 M7.4,3 V7 M3.6,3 H7.4 M3.6,7 H7.4 M3.6,3 V1.9 A1.35,1.35 0 1 0 2.25,3.3 H3.6 M7.4,3 V1.9 A1.35,1.35 0 1 1 8.75,3.3 H7.4 M3.6,7 V8.1 A1.35,1.35 0 1 1 2.25,6.7 H3.6 M7.4,7 V8.1 A1.35,1.35 0 1 0 8.75,6.7 H7.4" fill="none" stroke="#fff" stroke-width="1.4"/></svg></div>
<div class="mi" style="left:180px;top:53.10px">O</div>
<div class="ic" style="left:155.9px;top:54.40px"><svg width="11" height="10" viewBox="0 0 11 10"><path d="M5.3,0.7 L10,5.3 H7.7 V9.3 H2.9 V5.3 H0.6 Z" fill="none" stroke="#fff" stroke-width="1.2" stroke-linejoin="miter"/></svg></div>
<div class="mi" style="top:69.20px">Open Recent</div>
<div class="ic" style="left:177.7px;top:71.80px"><svg width="9" height="9" viewBox="0 0 9 9"><path d="M0,0.3 L8.4,4.5 L0,8.7 Z" fill="#fff"/></svg></div>
<div class="mi" style="top:96.40px">Close</div>
<div class="ic" style="left:168.3px;top:98.00px"><svg width="11" height="10" viewBox="0 0 11 10"><path d="M3.6,3 V7 M7.4,3 V7 M3.6,3 H7.4 M3.6,7 H7.4 M3.6,3 V1.9 A1.35,1.35 0 1 0 2.25,3.3 H3.6 M7.4,3 V1.9 A1.35,1.35 0 1 1 8.75,3.3 H7.4 M3.6,7 V8.1 A1.35,1.35 0 1 1 2.25,6.7 H3.6 M7.4,7 V8.1 A1.35,1.35 0 1 0 8.75,6.7 H7.4" fill="none" stroke="#fff" stroke-width="1.4"/></svg></div>
<div class="mi" style="left:180px;top:96.40px">W</div>
<div class="mi" style="top:112.90px">Save</div>
<div class="ic" style="left:168.3px;top:114.50px"><svg width="11" height="10" viewBox="0 0 11 10"><path d="M3.6,3 V7 M7.4,3 V7 M3.6,3 H7.4 M3.6,7 H7.4 M3.6,3 V1.9 A1.35,1.35 0 1 0 2.25,3.3 H3.6 M7.4,3 V1.9 A1.35,1.35 0 1 1 8.75,3.3 H7.4 M3.6,7 V8.1 A1.35,1.35 0 1 1 2.25,6.7 H3.6 M7.4,7 V8.1 A1.35,1.35 0 1 0 8.75,6.7 H7.4" fill="none" stroke="#fff" stroke-width="1.4"/></svg></div>
<div class="mi" style="left:180px;top:112.90px">S</div>
<div class="mi" style="top:129.80px">Save As...</div>
<div class="ic" style="left:168.3px;top:131.40px"><svg width="11" height="10" viewBox="0 0 11 10"><path d="M3.6,3 V7 M7.4,3 V7 M3.6,3 H7.4 M3.6,7 H7.4 M3.6,3 V1.9 A1.35,1.35 0 1 0 2.25,3.3 H3.6 M7.4,3 V1.9 A1.35,1.35 0 1 1 8.75,3.3 H7.4 M3.6,7 V8.1 A1.35,1.35 0 1 1 2.25,6.7 H3.6 M7.4,7 V8.1 A1.35,1.35 0 1 0 8.75,6.7 H7.4" fill="none" stroke="#fff" stroke-width="1.4"/></svg></div>
<div class="mi" style="left:180px;top:129.80px">S</div>
<div class="ic" style="left:155.9px;top:131.10px"><svg width="11" height="10" viewBox="0 0 11 10"><path d="M5.3,0.7 L10,5.3 H7.7 V9.3 H2.9 V5.3 H0.6 Z" fill="none" stroke="#fff" stroke-width="1.2" stroke-linejoin="miter"/></svg></div>
<div class="mi" style="top:145.90px">Save as Web Page...</div>
<div class="mi" style="top:171.90px">Share</div>
<div class="ic" style="left:177.7px;top:174.50px"><svg width="9" height="9" viewBox="0 0 9 9"><path d="M0,0.3 L8.4,4.5 L0,8.7 Z" fill="#fff"/></svg></div>
<div class="mi" style="top:198.70px">Web Page Preview</div>
<div class="mi" style="top:225.80px">Restrict Permissions</div>
<div class="ic" style="left:177.7px;top:228.40px"><svg width="9" height="9" viewBox="0 0 9 9"><path d="M0,0.3 L8.4,4.5 L0,8.7 Z" fill="#fff"/></svg></div>
<div class="mi" style="top:252.30px">Reduce File Size...</div>
<div class="mi" style="top:279.20px">Page Setup...</div>
<div class="mi" style="top:295.40px">Print...</div>
<div class="ic" style="left:168.3px;top:297.00px"><svg width="11" height="10" viewBox="0 0 11 10"><path d="M3.6,3 V7 M7.4,3 V7 M3.6,3 H7.4 M3.6,7 H7.4 M3.6,3 V1.9 A1.35,1.35 0 1 0 2.25,3.3 H3.6 M7.4,3 V1.9 A1.35,1.35 0 1 1 8.75,3.3 H7.4 M3.6,7 V8.1 A1.35,1.35 0 1 1 2.25,6.7 H3.6 M7.4,7 V8.1 A1.35,1.35 0 1 0 8.75,6.7 H7.4" fill="none" stroke="#fff" stroke-width="1.4"/></svg></div>
<div class="mi" style="left:180px;top:295.40px">P</div>
<div class="mi" style="top:322.20px">Properties...</div>
<div class="sep" style="top:89.00px"></div>
<div class="sep" style="top:165.30px"></div>
<div class="sep" style="top:192.20px"></div>
<div class="sep" style="top:219.00px"></div>
<div class="sep" style="top:245.10px"></div>
<div class="sep" style="top:272.00px"></div>
<div class="sep" style="top:315.70px"></div>
</div>
</body></html>
